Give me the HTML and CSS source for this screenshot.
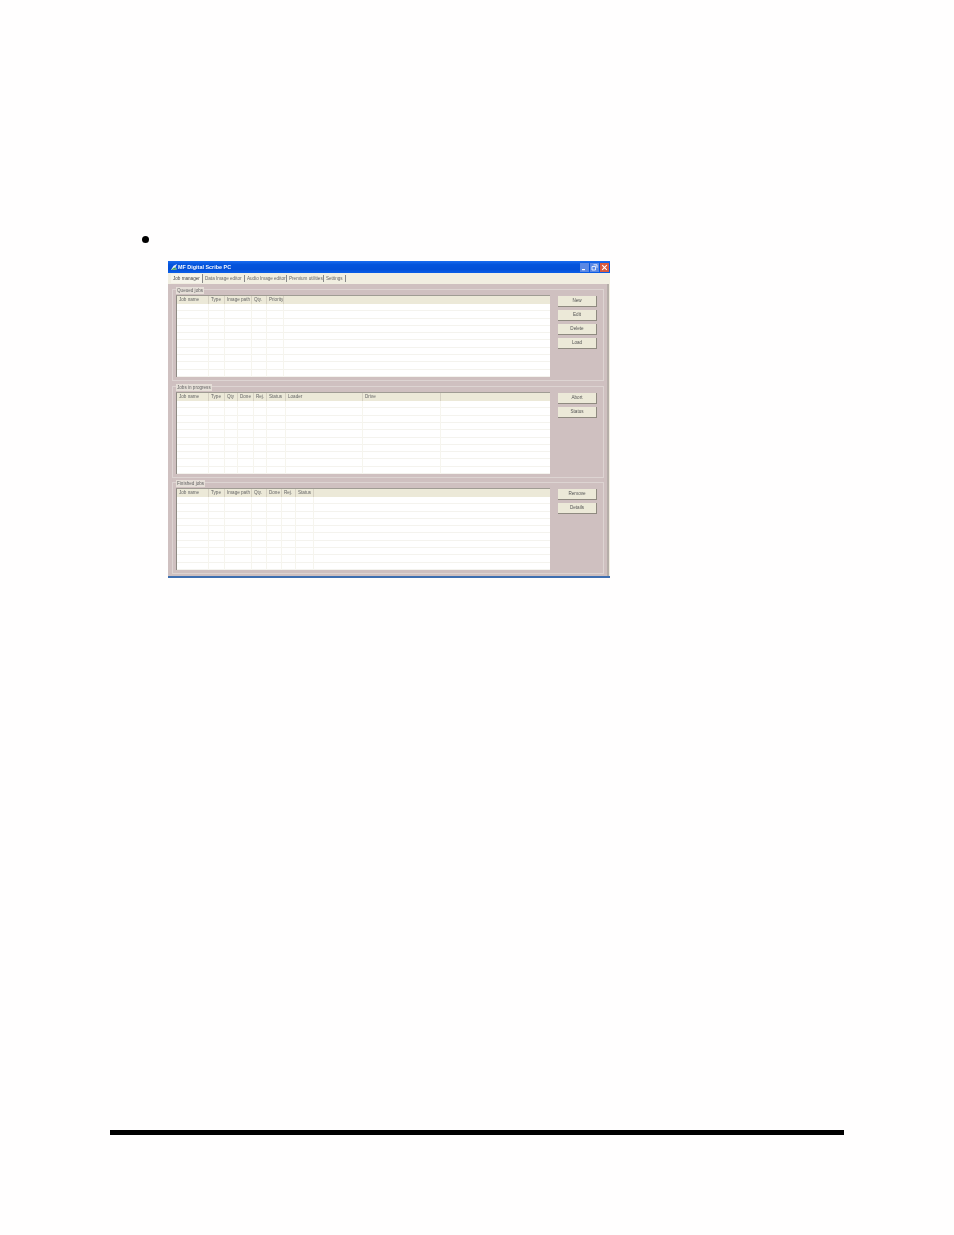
FILE: index.html
```html
<!DOCTYPE html>
<html lang="en">
<head>
<meta charset="utf-8">
<title>MF Digital Scribe PC</title>
<link rel="stylesheet" href="styles.css">
</head>
<body>
<div class="bullet"></div>
<div class="window">
  <div class="titlebar">
    <svg class="appicon" viewBox="0 0 9 9"><path d="M1 8 L4 3 L8 1 L6 5 L8 7 L3 8 Z" fill="#dfe8f5"/><path d="M1 8 L5 5 L8 7 Z" fill="#39a04a"/></svg>
    <span class="apptitle">MF Digital Scribe PC</span>
    <div class="winbtns">
      <svg class="winbtn" viewBox="0 0 9 9"><rect x="2" y="6" width="3" height="1.2" fill="#fff"/></svg>
      <svg class="winbtn" viewBox="0 0 9 9"><path d="M3.5 1.8h3.5v3M2 3.5h3.5v3.5H2z" fill="none" stroke="#fff" stroke-width=".8"/></svg>
      <svg class="winbtn close" viewBox="0 0 9 9"><path d="M2.2 2.2l4.6 4.6M6.8 2.2L2.2 6.8" stroke="#fff" stroke-width="1.1"/></svg>
    </div>
  </div>
  <div class="tabs">
    <span class="tab active">Job manager</span>
    <span class="tab t2">Data Image editor</span>
    <span class="tab t3">Audio Image editor</span>
    <span class="tab t4">Premium utilities</span>
    <span class="tab t5">Settings</span>
  </div>
  <div class="body">
    <section class="group g1">
      <div class="legend l1">Queued jobs</div>
      <div class="content">
        <div class="list q">
          <div class="head"><span>Job name</span><span>Type</span><span>Image path</span><span>Qty.</span><span>Priority</span><span></span></div>
          <div class="rows"><i></i><i></i><i></i><i></i><i></i><i></i></div>
        </div>
        <div class="buttons"><button>New</button><button>Edit</button><button>Delete</button><button>Load</button></div>
      </div>
    </section>
    <section class="group g2">
      <div class="legend l2">Jobs in progress</div>
      <div class="content">
        <div class="list p">
          <div class="head"><span>Job name</span><span>Type</span><span>Qty</span><span>Done</span><span>Rej.</span><span>Status</span><span>Loader</span><span>Drive</span><span></span></div>
          <div class="rows"><i></i><i></i><i></i><i></i><i></i><i></i><i></i><i></i><i></i></div>
        </div>
        <div class="buttons"><button>Abort</button><button>Status</button></div>
      </div>
    </section>
    <section class="group g3">
      <div class="legend l3">Finished jobs</div>
      <div class="content">
        <div class="list f">
          <div class="head"><span>Job name</span><span>Type</span><span>Image path</span><span>Qty.</span><span>Done</span><span>Rej.</span><span>Status</span><span></span></div>
          <div class="rows"><i></i><i></i><i></i><i></i><i></i><i></i><i></i><i></i></div>
        </div>
        <div class="buttons"><button>Remove</button><button>Details</button></div>
      </div>
    </section>
  </div>
</div>
<div class="rule"></div>
</body>
</html>
```
FILE: styles.css
```css
* { box-sizing: border-box; }
html, body { margin: 0; padding: 0; background: #fffefe; }
body { width: 954px; height: 1235px; overflow: hidden; font-family: "Liberation Sans", Arial, sans-serif; }
.bullet { width: 7px; height: 7px; border-radius: 50%; background: #000; margin: 236px 0 0 142px; }
.window {
  width: 442px; height: 317px; margin: 18px 0 0 168px;
  display: flex; flex-direction: column;
  background: #f1eee1;
  border-bottom: 2px solid #3f6fb0;
  filter: blur(0.4px);
}
.titlebar {
  height: 12px; display: flex; align-items: center; padding: 0 1px 0 2px; flex: none;
  background: linear-gradient(#1a6cf0, #0454dc 30%, #0350d8 70%, #0b5fe8);
}
.appicon { width: 8px; height: 8px; flex: none; }
.apptitle { font-size: 5.4px; font-weight: 700; color: #f4f7ff; letter-spacing: .02px; }
.winbtns { margin-left: auto; display: flex; gap: 1px; }
.winbtn { width: 9px; height: 9px; background: #5a88e4; }
.winbtn.close { background: #d85a3e; }
.tabs { height: 11px; flex: none; display: flex; align-items: center; font-size: 4.6px; color: #666; padding-left: 3px; background: #f1eee1; }
.tab { padding: 0 2px; border-right: 1px solid #888; height: 7px; line-height: 7px; white-space: nowrap; }
.tab.active { width: 32px; color: #444; background: #f6f4ea; height: 9px; line-height: 9px; }
.t2 { width: 42px; }
.t3 { width: 42px; }
.t4 { width: 37px; }
.t5 { width: 22px; }
.body {
  flex: 1; display: flex; flex-direction: column; gap: 4px;
  background: #cfc0c0; padding: 5px 3px 0 4px;
  border-right: 2px solid #b5ada8; margin-right: 1px;
}
.group { flex: none; height: 92px; border: 1px solid #ddd4d2; display: flex; flex-direction: column; padding: 0 6px 3px 3px; }
.g2 { margin-top: 1px; }
.legend {
  flex: none; margin-top: -3px; height: 7px; line-height: 7px; font-size: 4.6px; color: #666;
  background: #e6dfd8; padding-left: 1px; white-space: nowrap;
}
.l1 { width: 28px; }
.l2 { width: 36px; }
.l3 { width: 29px; }
.content { flex: 1; display: flex; margin-top: 1px; min-height: 0; }
.list { width: 374px; flex: none; display: flex; flex-direction: column; background: #fff; border-left: 1px solid #8e8a84; border-top: 1px solid #a09c94; }
.head { height: 8px; flex: none; display: grid; background: #ece9d8; font-size: 4.6px; line-height: 8px; color: #666; }
.head span { padding-left: 2px; border-right: 1px solid #d6d1c2; white-space: nowrap; overflow: hidden; }
.head span:last-child { border-right: 0; }
.rows { flex: 1; display: grid; background: repeating-linear-gradient(#fff 0, #fff 6.3px, #f4f3ee 6.3px, #f4f3ee 7.3px); }
.rows i { border-right: 1px solid #f6f5ee; }
.rows i:last-child { border-right: 0; }
.q .head, .q .rows { grid-template-columns: 32px 16px 27px 15px 17px 1fr; }
.p .head, .p .rows { grid-template-columns: 32px 16px 13px 16px 13px 19px 77px 78px 1fr; }
.f .head, .f .rows { grid-template-columns: 32px 16px 27px 15px 15px 14px 18px 1fr; }
.buttons { flex: none; width: 39px; margin: 1px 0 0 8px; display: flex; flex-direction: column; gap: 3px; }
.buttons button {
  width: 39px; height: 11px; padding: 0; font: 4.6px/1 "Liberation Sans", Arial, sans-serif; color: #555;
  background: #ece9d8; border: 0; border-right: 1px solid #8f8a80; border-bottom: 1px solid #8f8a80;
}
.rule { width: 734px; height: 5px; background: #000; margin: 552px 0 0 110px; }
```
